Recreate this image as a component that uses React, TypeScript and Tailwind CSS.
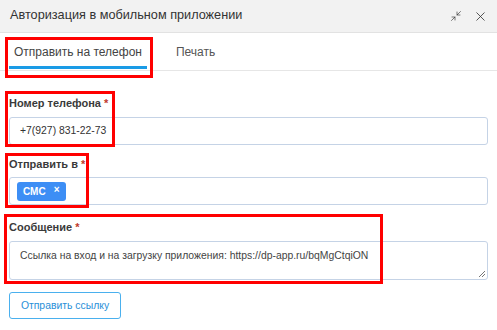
import { Minimize2, X } from 'lucide-react';

function Req() {
  return <span className="text-[#c0392b]"> *</span>;
}

export default function App() {
  return (
    <div className="relative w-[497px] h-[330px] bg-white text-[#333] font-['Liberation_Sans',Arial,sans-serif] overflow-hidden">
      {/* Заголовок */}
      <div className="h-[33px] bg-[#f2f2f2] border-b border-[#e2e2e2] flex items-center justify-between pl-[10px] pr-[9px]">
        <span className="text-[12.7px] text-[#333]">Авторизация в мобильном приложении</span>
        <div className="flex items-center gap-[11px] text-[#333]">
          <Minimize2 size={12} strokeWidth={1.3} />
          <X size={15} strokeWidth={1.3} />
        </div>
      </div>

      {/* Вкладки */}
      <div className="h-[38px] flex border-b border-[#e6e6e6] pl-[9px]">
        <div className="relative px-[5px] flex items-center text-[12px] text-[#444]">
          Отправить на телефон
          <div className="absolute left-0 right-0 bottom-[1px] h-[3px] bg-[#1a9be6]" />
        </div>
        <div className="ml-[29px] flex items-center text-[12px] text-[#555]">Печать</div>
      </div>

      {/* Форма */}
      <div className="px-[9px] pt-[25px] flex flex-col">
        <label className="text-[11px] font-bold text-[#3a3a3a] leading-[14px]">Номер телефона<Req /></label>
        <div className="mt-[7px] h-[28px] border border-[#c5d3e6] rounded-[3px] flex items-center pl-[10px] text-[10.4px] text-[#333]">
          +7(927) 831-22-73
        </div>

        <label className="mt-[12px] text-[11px] font-bold text-[#3a3a3a] leading-[14px]">Отправить в<Req /></label>
        <div className="mt-[6px] h-[28px] border border-[#c5d3e6] rounded-[3px] flex items-center pl-[7px]">
          <span className="h-[19px] px-[6px] rounded-[3px] bg-[#3d8ef5] text-white text-[10px] font-bold flex items-center gap-[8px]">
            СМС <span className="text-[10px] leading-none -mt-[3px]">×</span>
          </span>
        </div>

        <label className="mt-[15px] text-[11px] font-bold text-[#3a3a3a] leading-[14px]">Сообщение<Req /></label>
        <div className="relative mt-[7px] h-[39px] border border-[#c5d3e6] rounded-[3px] pl-[10px] pt-[6px] text-[10.4px] text-[#444]">
          Ссылка на вход и на загрузку приложения: https://dp-app.ru/bqMgCtqiON
          <svg className="absolute right-[1px] bottom-[1px]" width="9" height="9" viewBox="0 0 9 9">
            <path d="M8 2 L2 8 M8 5 L5 8" stroke="#777" strokeWidth="1" />
          </svg>
        </div>

        <div className="mt-[12px]">
          <button className="h-[27px] w-[112px] border border-[#4ab0ee] rounded-[3px] text-[10.4px] text-[#2a8fd8] bg-white">
            Отправить ссылку
          </button>
        </div>
      </div>

      {/* Красные рамки-пометки */}
      <div className="absolute left-[5px] top-[37px] w-[148px] h-[41px] border-[3px] border-[#ff0000]" />
      <div className="absolute left-[5px] top-[91px] w-[110px] h-[56px] border-[3px] border-[#ff0000]" />
      <div className="absolute left-[5px] top-[153px] w-[84px] h-[55px] border-[3px] border-[#ff0000]" />
      <div className="absolute left-[4px] top-[214px] w-[379px] h-[70px] border-[3px] border-[#ff0000]" />
    </div>
  );
}
